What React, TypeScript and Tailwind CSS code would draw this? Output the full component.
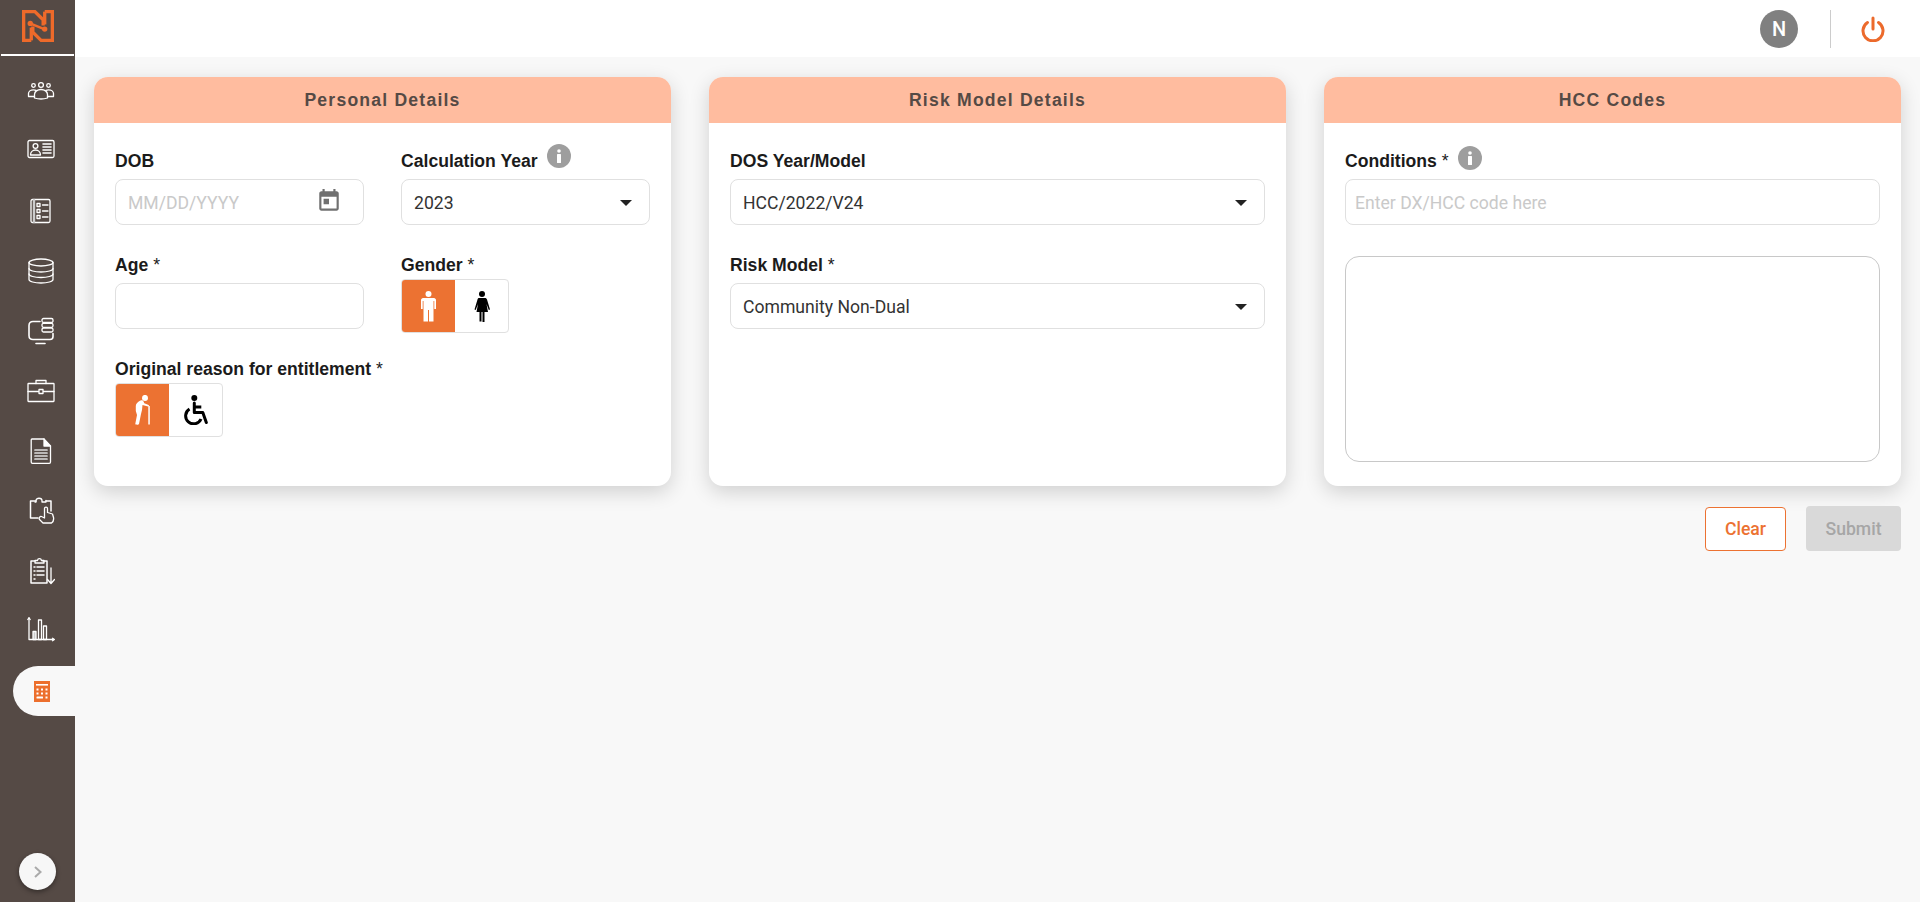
import React from "react";

const Ico = ({ children, w = 28, h = 28 }: { children: React.ReactNode; w?: number; h?: number }) => (
  <svg width={w} height={h} viewBox={`0 0 ${w} ${h}`} fill="none" stroke="#fff" strokeWidth="1.3" strokeLinecap="round" strokeLinejoin="round">
    {children}
  </svg>
);

const icons: React.ReactNode[] = [
  <Ico key="g"><circle cx="14" cy="8" r="2.4" /><circle cx="6.5" cy="8.5" r="1.8" /><circle cx="21.5" cy="8.5" r="1.8" /><path d="M7.5 21v-3.5c0-3 3-5 6.5-5s6.5 2 6.5 5V21c-4 1.2-9 1.2-13 0z" /><path d="M7.5 19.5H1.5v-3c0-2 2-3.7 5-3.7 1 0 1.8.2 2.5.6" /><path d="M20.5 19.5h6v-3c0-2-2-3.7-5-3.7-1 0-1.8.2-2.5.6" /></Ico>,
  <Ico key="c"><rect x="1" y="3.500" width="26" height="17" rx="1.5" /><circle cx="8.5" cy="9" r="2.4" /><path d="M3.500 18c0-3 2.200-5 5-5s5 2 5 5z" /><path d="M16 7h8M16 10h8M16 13h8M16 16h8" strokeWidth="1.6" /></Ico>,
  <Ico key="l"><rect x="4" y="2.5" width="19" height="23" rx="1.5" /><path d="M7 3v22" strokeWidth="2.4" stroke="#ccc" /><rect x="10" y="6.5" width="3" height="3" /><rect x="10" y="12.5" width="3" height="3" /><rect x="10" y="18.5" width="3" height="3" /><path d="M15.5 8h5.5M15.5 14h5.5M15.5 20h5.5" /></Ico>,
  <Ico key="d"><ellipse cx="14" cy="5.5" rx="12" ry="3.5" /><path d="M2 5.5v17c0 2 5.5 3.5 12 3.5s12-1.500 12-3.500v-17" /><path d="M2 11.500c0 2 5.500 3.500 12 3.500s12-1.500 12-3.500M2 17c0 2 5.500 3.500 12 3.500s12-1.500 12-3.500" /></Ico>,
  <Ico key="m"><path d="M13 4.500H6c-2.500 0-4 1.500-4 4v10c0 2.500 1.500 4 4 4h17c1.500 0 3-1 3-3v-3" strokeWidth="1.6" /><path d="M9 26.500h9" strokeWidth="1.6" /><rect x="15" y="1.500" width="11" height="4" rx="1.500" /><rect x="15" y="6.300" width="11" height="4" rx="1.500" /><rect x="15" y="11" width="11" height="4" rx="1.500" /></Ico>,
  <Ico key="b"><rect x="1" y="6.500" width="26" height="18" rx="0.500" /><path d="M1 14.500h26" /><path d="M9 6.500V3.500h10v3" /><rect x="12" y="12.500" width="4" height="4" fill="#554a45" /></Ico>,
  <Ico key="f"><path d="M5 2h12l6.500 7v16c0 .8-.5 1.300-1.300 1.300H5.500c-.8 0-1.300-.5-1.300-1.300V3c0-.6.3-1 .8-1z" /><path d="M17 2v7h6.500" fill="#fff" /><path d="M8 13h12M8 16h12M8 19h12M8 22h12" strokeWidth="1.700" stroke="#ddd" /></Ico>,
  <Ico key="h"><path d="M9 4H3.500v17H11M19 4h5v10" strokeWidth="1.500" /><path d="M9 5V3.500c0-3 6-3 6 0V5h4v-1.500M9 5H8" /><path d="M12.500 22.500l3.500 3.500h8.500c2-1.500 2.500-3 2-5.500l-1-3.500-5-1.500v-4c0-1.800-3-1.800-3 0V21l-3-1.500c-1.500-.5-3 1.500-2 3z" fill="#554a45" /></Ico>,
  <Ico key="i"><path d="M8 4H4v22h16V4h-4" strokeWidth="1.500" /><path d="M8 6V3.500h2.500c.3-2.500 3.500-2.500 4 0H17V6z" /><path d="M7 10h1M7 14h1M7 18h1M7 22h1M10 10h7M10 14h7M10 18h7" strokeWidth="1.500" /><path d="M24 11v15M20.500 22.500L24 26.500l3.500-4" /></Ico>,
  <Ico key="a"><path d="M2 1v21.500h25" /><path d="M.8 2.500L2 .8l1.200 1.700M25.500 21.300l1.800 1.200-1.800 1.200" /><rect x="6" y="14.500" width="3" height="8" fill="#ccc" /><rect x="11.500" y="3" width="3" height="19.500" /><rect x="16.500" y="9" width="3" height="13.500" /></Ico>,
];

const Calc = () => (
  <svg width="16" height="21" viewBox="0 0 16 21">
    <rect width="16" height="21" fill="#ec6f2d" />
    <g fill="#fff">
      <rect x="2" y="3" width="12" height="1.600" />
      <rect x="2.500" y="7.500" width="2" height="2" /><rect x="7" y="7.500" width="2" height="2" /><rect x="11.500" y="7.500" width="2" height="2" />
      <rect x="2.500" y="11.500" width="2" height="2" /><rect x="7" y="11.500" width="2" height="2" /><rect x="11.500" y="11.500" width="2" height="2" />
      <rect x="2.500" y="15.500" width="6.500" height="2" rx="0.500" /><rect x="11.500" y="15.500" width="2" height="2" />
    </g>
  </svg>
);

const Logo = () => (
  <svg width="32" height="32" viewBox="0 0 31 31" fill="none" stroke="#ee6a2a" strokeWidth="3.200">
    <path d="M9 29.400H1.600V1.600H12.500L20.500 9.500V15" />
    <path d="M22 1.600H29.400V29.400H18.500L10.500 21.500V16" />
    <path d="M9 29.400V17" />
    <path d="M22 1.600V14" />
    <path d="M9 13.500L21.500 18.500" strokeWidth="2.400" />
    <circle cx="8" cy="13" r="2.600" fill="#ee6a2a" stroke="none" />
    <circle cx="22" cy="18.500" r="2.600" fill="#ee6a2a" stroke="none" />
  </svg>
);

const Sidebar = () => (
  <aside className="w-[75px] shrink-0 h-full bg-[#554a45] flex flex-col">
    <div className="h-[56px] shrink-0 flex items-center justify-center pb-[3px] border-b-2 border-white mx-[1px]">
      <Logo />
    </div>
    <nav className="flex flex-col mt-[5px]">
      {icons.map((ic, i) => (
        <div key={i} className="h-[60px] flex items-center justify-center pl-[7px]">{ic}</div>
      ))}
      <div className="h-[60px] flex items-center">
        <div className="ml-[13px] w-[62px] h-[50px] bg-[#f8f8f8] rounded-l-[25px] flex items-center justify-center pr-[5px]">
          <Calc />
        </div>
      </div>
    </nav>
    <div className="mt-auto mb-[12px] ml-[19px] w-[37px] h-[37px] rounded-full bg-[#f7f7f7] shadow-[0_2px_5px_rgba(0,0,0,0.4)] flex items-center justify-center">
      <svg width="10" height="14" viewBox="0 0 10 14" fill="none" stroke="#aaa" strokeWidth="2"><path d="M2 2l5.500 5-5.500 5" /></svg>
    </div>
  </aside>
);

const Label = ({ text, req, info, infoTop, mb = "mb-[6px]" }: { text: string; req?: boolean; info?: boolean; infoTop?: boolean; mb?: string }) => (
  <div className={`h-[24px] ${mb} flex items-center text-[17.6px] leading-[24px] font-bold text-[#1b1b1b] font-['Liberation_Sans',sans-serif] whitespace-nowrap`}>
    {text}
    {req && <span className="font-normal">&nbsp;*</span>}
    {info && (
      <span className={`ml-[9px] w-[24px] h-[24px] rounded-full bg-[#9e9e9e] flex items-center justify-center ${infoTop ? "-mt-[10px]" : "-mt-[6px]"}`}>
        <svg width="6" height="14" viewBox="0 0 6 14" fill="#fff"><circle cx="3" cy="2" r="1.800" /><rect x="1" y="5" width="4" height="9" rx="0.500" /></svg>
      </span>
    )}
  </div>
);

const boxCls = "h-[46px] w-full rounded-[8px] border border-[#e0e0e0] bg-white flex items-center pt-[2px] text-[17.6px] font-['Roboto',sans-serif]";

const Caret = () => (
  <svg width="12" height="6" viewBox="0 0 12 6" className="ml-auto mr-[17px]"><path d="M0 0h12L6 6z" fill="#222" /></svg>
);

const Select = ({ value }: { value: string }) => (
  <div className={`${boxCls} pl-[12px] text-[#333]`}>
    {value}
    <Caret />
  </div>
);

const Toggle = ({ left, right }: { left: React.ReactNode; right: React.ReactNode }) => (
  <div className="w-[108px] h-[54px] flex rounded-[4px] border border-[#e0e0e0] overflow-hidden bg-white">
    <div className="w-[53px] bg-[#ec7232] flex items-center justify-center">{left}</div>
    <div className="flex-1 flex items-center justify-center">{right}</div>
  </div>
);

const Male = ({ color }: { color: string }) => (
  <svg width="15" height="31" viewBox="0 0 15 31" fill={color}>
    <circle cx="7.500" cy="3" r="3" />
    <path d="M2 7h11c1 0 2 1 2 2v9h-1.700V10h-.8v20.500H8V19H7v11.500H2.500V10h-.8v8H0V9c0-1 1-2 2-2z" />
  </svg>
);

const Female = ({ color }: { color: string }) => (
  <svg width="16" height="31" viewBox="0 0 16 31" fill={color}>
    <circle cx="8" cy="3" r="3" />
    <path d="M5 7h6c1 0 1.500.5 2 1.500l3 10-1.200.5-2.300-6 1.500 8H10.500v10h-2V21h-1v9.500h-2V21H2.500L4 13l-2.300 6-1.200-.5 3-10C4 7.500 4 7 5 7z" />
  </svg>
);

const Elder = () => (
  <svg width="17" height="30" viewBox="0 0 17 30" fill="#fff">
    <circle cx="11" cy="2.900" r="3" />
    <path d="M5.500 6C7 4.800 9 5.200 9.500 6.500L10.300 8.300 14.600 10C15.400 10.400 15 11.700 14 11.400L8.500 10 8 15 7 19 5 29C4.800 30 1 30 1.300 28.800L3 20 1.800 16V11C1.800 9 3.500 7 5.500 6z" />
    <rect x="14.300" y="11" width="1.500" height="18.500" />
  </svg>
);

const Wheel = () => (
  <svg width="25" height="30" viewBox="0 0 25 30" fill="none" stroke="#000" strokeWidth="3">
    <circle cx="11.300" cy="3" r="3" fill="#000" stroke="none" />
    <path d="M11.300 8v9.500h8.500l3.500 10" strokeLinecap="round" strokeLinejoin="round" />
    <path d="M11.300 12h7" />
    <path d="M6.500 14a8 8 0 1 0 11.500 10" />
  </svg>
);

const Card = ({ title, children }: { title: string; children: React.ReactNode }) => (
  <section className="h-[409px] bg-white rounded-[14px] shadow-[0_6px_20px_rgba(0,0,0,0.16)]">
    <h2 className="h-[46px] bg-[#ffbc9f] rounded-t-[14px] flex items-center justify-center text-[17.6px] font-bold tracking-[1.200px] text-[#554a45] font-['Liberation_Sans',sans-serif]">
      {title}
    </h2>
    <div className="px-[21px] pt-[26px]">{children}</div>
  </section>
);

const Header = () => (
  <header className="h-[57px] shrink-0 bg-white flex items-center justify-end">
    <div className="w-[38px] h-[38px] rounded-full bg-[#808080] text-white flex items-center justify-center text-[20px] font-medium font-['Roboto',sans-serif]">N</div>
    <div className="w-px h-[38px] bg-[#cccccc] ml-[32px] mr-[30px]" />
    <svg width="24" height="26" viewBox="0 0 24 26" fill="none" stroke="#ec6a2c" strokeWidth="3" strokeLinecap="round" className="mr-[35px]">
      <path d="M12 2v11" />
      <path d="M6.500 6.500a10 10 0 1 0 11 0" />
    </svg>
  </header>
);

export default function App() {
  return (
    <div className="flex h-screen w-full overflow-hidden bg-[#f8f8f8] font-['Roboto',sans-serif]">
      <Sidebar />
      <div className="flex-1 min-w-0 flex flex-col">
        <Header />
        <main className="flex-1 px-[19px] pt-[20px]">
          <div className="grid grid-cols-3 gap-x-[38px]">
            <Card title="Personal Details">
              <div className="grid grid-cols-2 gap-x-[37px]">
                <div className="h-[104px]">
                  <Label text="DOB" />
                  <div className={`${boxCls} pl-[12px] text-[#c9c9c9]`}>
                    MM/DD/YYYY
                    <svg width="26" height="26" viewBox="0 0 24 24" fill="#707070" className="ml-auto mr-[21px] -mt-[5px]">
                      <path d="M19 3h-1V1h-2v2H8V1H6v2H5c-1.110 0-1.990.9-1.990 2L3 19c0 1.100.89 2 2 2h14c1.100 0 2-.9 2-2V5c0-1.100-.9-2-2-2zm0 16H5V8h14v11zM7 10h5v5H7z" />
                    </svg>
                  </div>
                </div>
                <div className="h-[104px]">
                  <Label text="Calculation Year" info infoTop />
                  <Select value="2023" />
                </div>
                <div className="h-[104px]">
                  <Label text="Age" req />
                  <div className={boxCls} />
                </div>
                <div className="h-[104px]">
                  <Label text="Gender" req mb="mb-[2px]" />
                  <Toggle left={<Male color="#fff" />} right={<Female color="#000" />} />
                </div>
              </div>
              <Label text="Original reason for entitlement" req mb="mb-[2px]" />
              <Toggle left={<Elder />} right={<Wheel />} />
            </Card>
            <Card title="Risk Model Details">
              <div className="h-[104px]">
                <Label text="DOS Year/Model" />
                <Select value="HCC/2022/V24" />
              </div>
              <Label text="Risk Model" req />
              <Select value="Community Non-Dual" />
            </Card>
            <Card title="HCC Codes">
              <Label text="Conditions" req info />
              <div className={`${boxCls} pl-[9px] text-[#c9c9c9]`}>Enter DX/HCC code here</div>
              <div className="mt-[31px] h-[206px] rounded-[14px] border border-[#c8c8c8] bg-white" />
            </Card>
          </div>
          <div className="mt-[20px] flex justify-end items-center gap-[20px] font-['Roboto',sans-serif] text-[17.6px] font-medium">
            <button className="w-[81px] h-[44px] pt-[2px] rounded-[4px] border border-[#ec7232] text-[#ec7232] bg-white">Clear</button>
            <button className="w-[95px] h-[45px] pt-[2px] rounded-[4px] bg-[#d9d9d9] text-[#a6a6a6]">Submit</button>
          </div>
        </main>
      </div>
    </div>
  );
}
